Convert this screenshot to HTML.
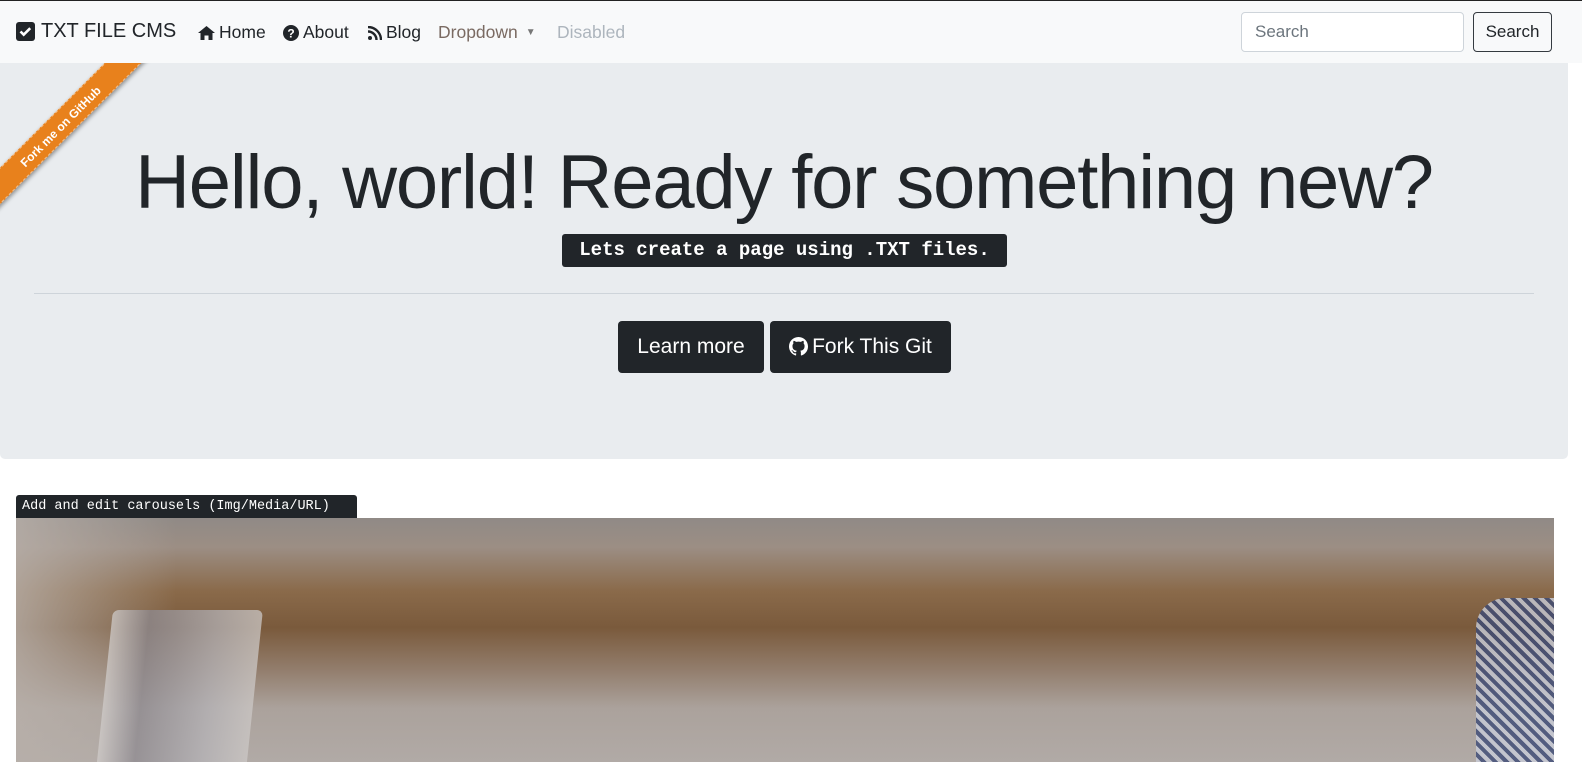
<!DOCTYPE html>
<html><head><meta charset="utf-8"><style>
*{box-sizing:border-box;margin:0;padding:0}
body{width:1582px;height:762px;overflow:hidden;background:#fff;font-family:"Liberation Sans",sans-serif;color:#212529;position:relative}
.nav{position:absolute;left:0;top:0;width:1582px;height:63px;background:#f8f9fa;border-top:1px solid #222}
.brand{position:absolute;left:16px;top:19px;font-size:20px;color:#212529;display:flex;align-items:center;gap:6px}
.nl{position:absolute;top:21px;font-size:17.5px;display:flex;align-items:center;gap:4px}
.search{position:absolute;left:1241px;top:11px;width:223px;height:40px;border:1px solid #ced4da;border-radius:4px;background:#fff;font-size:17px;color:#6c757d;padding:9px 13px}
.sbtn{position:absolute;left:1473px;top:11px;width:79px;height:40px;border:1px solid #343a40;border-radius:4px;font-size:17px;padding:9px 0;text-align:center}
.jumbo{position:absolute;left:0;top:63px;width:1568px;height:396px;background:#e9ecef;border-radius:0 0 5px 5px;overflow:hidden}
.ribbon{position:absolute;left:-60px;top:50px;width:240px;height:26px;background:#e8811c;transform:rotate(-45deg);color:#fff;font-size:12px;font-weight:bold;text-align:center;line-height:26px;border-top:1px dashed rgba(255,255,255,.5);border-bottom:1px dashed rgba(255,255,255,.5);box-shadow:0 2px 4px rgba(0,0,0,.4)}
h1{position:absolute;left:0;width:1568px;top:76px;text-align:center;font-weight:300;font-size:76px;letter-spacing:-1.2px;color:#212529;white-space:nowrap}
.code{position:absolute;left:562px;top:171px;width:445px;height:33px;background:#212529;color:#fff;border-radius:3px;font-family:"Liberation Mono",monospace;font-weight:bold;font-size:19px;text-align:center;line-height:33px}
hr{position:absolute;left:34px;top:230px;width:1500px;border:0;border-top:1px solid #ced4da}
.btn{position:absolute;top:258px;height:52px;background:#212529;color:#fff;border-radius:4px;font-size:21px;line-height:52px;text-align:center}
.cap{position:absolute;left:16px;top:495px;width:341px;height:24px;background:#212529;color:#fff;border-radius:3px 3px 0 0;font-family:"Liberation Mono",monospace;font-size:13.5px;line-height:24px;padding-left:6px}
.photo{position:absolute;left:16px;top:518px;width:1538px;height:244px;overflow:hidden;
background:linear-gradient(180deg,#908a86 0%,#9c8e84 12%,#8a6a4a 30%,#7a5a3c 45%,#927d6c 62%,#aba29c 78%,#b1aaa6 100%)}
</style></head><body>
<div class="nav">
 <div class="brand"><svg width="19" height="19" viewBox="0 0 19 19"><rect x="0" y="0" width="19" height="19" rx="3" fill="#212529"/><path d="M4.5 9.5l3.2 3.2 6.5-6.5" stroke="#fff" stroke-width="2.6" fill="none"/></svg>TXT FILE CMS</div>
 <div class="nl" style="left:198px"><svg width="17" height="14" viewBox="0 0 17 14"><path d="M8.5 0L0 7h2.5v7h4V9.5h4V14h4V7H17z" fill="#212529"/></svg>Home</div>
 <div class="nl" style="left:283px"><svg width="16" height="16" viewBox="0 0 16 16"><circle cx="8" cy="8" r="8" fill="#212529"/><text x="8" y="12.5" font-size="12" font-weight="bold" fill="#fff" text-anchor="middle" font-family="Liberation Sans">?</text></svg>About</div>
 <div class="nl" style="left:368px"><svg width="14" height="14" viewBox="0 0 14 14"><circle cx="2" cy="12" r="2" fill="#212529"/><path d="M0 5.5a8.5 8.5 0 0 1 8.5 8.5M0 1a13 13 0 0 1 13 13" stroke="#212529" stroke-width="2.4" fill="none"/></svg>Blog</div>
 <div class="nl" style="left:438px;color:#7a6a62">Dropdown <span style="font-size:10px;color:#777;margin-left:4px">▼</span></div>
 <div class="nl" style="left:557px;color:#adb5bd">Disabled</div>
 <div class="search">Search</div>
 <div class="sbtn">Search</div>
</div>
<div class="jumbo">
 <div class="ribbon">Fork me on GitHub</div>
 <h1>Hello, world! Ready for something new?</h1>
 <div class="code">Lets create a page using .TXT files.</div>
 <hr>
 <div class="btn" style="left:618px;width:146px">Learn more</div>
 <div class="btn" style="left:770px;width:181px"><svg width="19" height="19" viewBox="0 0 16 16" style="vertical-align:-3px;margin-right:4px"><path fill="#fff" d="M8 0C3.58 0 0 3.58 0 8c0 3.54 2.29 6.53 5.47 7.59.4.07.55-.17.55-.38 0-.19-.01-.82-.01-1.49-2.01.37-2.53-.49-2.69-.94-.09-.23-.48-.94-.82-1.13-.28-.15-.68-.52-.01-.53.63-.01 1.08.58 1.23.82.72 1.21 1.87.87 2.330.66.07-.52.28-.87.51-1.07-1.78-.2-3.64-.89-3.64-3.95 0-.87.31-1.59.82-2.15-.08-.2-.36-1.02.08-2.12 0 0 .67-.21 2.2.82.64-.18 1.32-.27 2-.27.68 0 1.36.09 2 .27 1.53-1.04 2.2-.82 2.2-.82.44 1.1.16 1.92.08 2.12.51.56.82 1.27.82 2.15 0 3.07-1.87 3.75-3.65 3.95.29.25.54.73.54 1.48 0 1.07-.01 1.93-.01 2.2 0 .21.15.46.55.38A8.013 8.013 0 0016 8c0-4.42-3.58-8-8-8z"/></svg>Fork This Git</div>
</div>
<div class="cap">Add and edit carousels (Img/Media/URL)</div>
<div class="photo">
 <div style="position:absolute;left:0;top:0;width:160px;height:244px;background:linear-gradient(90deg,rgba(184,176,170,.8),rgba(184,176,170,0))"></div>
 <div style="position:absolute;left:88px;top:92px;width:150px;height:170px;background:linear-gradient(90deg,#d0ccca,#8e8a90 25%,#b4b2b6 70%,#ccc8c6);transform:skewX(-6deg);border-radius:6px 6px 0 0;opacity:.75"></div>
 <div style="position:absolute;left:1460px;top:80px;width:80px;height:170px;background:repeating-linear-gradient(45deg,#3c4a76 0 4px,#c8ccd8 4px 8px);border-radius:30px 0 0 0;opacity:.8"></div>
</div>
</body></html>
